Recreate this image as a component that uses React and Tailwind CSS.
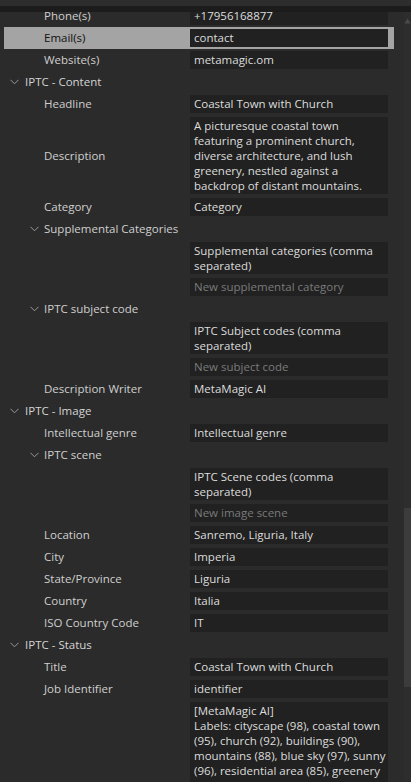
const font = { fontFamily: '"Open Sans", "Noto Sans", sans-serif' };

function Chevron() {
  return (
    <svg width="9" height="6" viewBox="0 0 9 6" className="shrink-0">
      <polyline points="0.5,0.8 4.5,4.8 8.5,0.8" fill="none" stroke="#9a9a9a" strokeWidth="1" />
    </svg>
  );
}

const rows = [
  { type: "field", label: "Phone(s)", value: "+17956168877" },
  { type: "field", label: "Email(s)", value: "contact", selected: true },
  { type: "field", label: "Website(s)", value: "metamagic.om" },
  { type: "section", label: "IPTC - Content" },
  { type: "field", label: "Headline", value: "Coastal Town with Church" },
  {
    type: "field",
    label: "Description",
    lines: [
      "A picturesque coastal town",
      "featuring a prominent church,",
      "diverse architecture, and lush",
      "greenery, nestled against a",
      "backdrop of distant mountains.",
    ],
  },
  { type: "field", label: "Category", value: "Category" },
  { type: "sub", label: "Supplemental Categories" },
  { type: "field", label: "", lines: ["Supplemental categories (comma", "separated)"] },
  { type: "field", label: "", placeholder: "New supplemental category" },
  { type: "sub", label: "IPTC subject code" },
  { type: "field", label: "", lines: ["IPTC Subject codes (comma", "separated)"] },
  { type: "field", label: "", placeholder: "New subject code" },
  { type: "field", label: "Description Writer", value: "MetaMagic AI" },
  { type: "section", label: "IPTC - Image" },
  { type: "field", label: "Intellectual genre", value: "Intellectual genre" },
  { type: "sub", label: "IPTC scene" },
  { type: "field", label: "", lines: ["IPTC Scene codes (comma", "separated)"] },
  { type: "field", label: "", placeholder: "New image scene" },
  { type: "field", label: "Location", value: "Sanremo, Liguria, Italy" },
  { type: "field", label: "City", value: "Imperia" },
  { type: "field", label: "State/Province", value: "Liguria" },
  { type: "field", label: "Country", value: "Italia" },
  { type: "field", label: "ISO Country Code", value: "IT" },
  { type: "section", label: "IPTC - Status" },
  { type: "field", label: "Title", value: "Coastal Town with Church" },
  { type: "field", label: "Job Identifier", value: "identifier" },
  {
    type: "field",
    label: "",
    lines: [
      "[MetaMagic AI]",
      "Labels: cityscape (98), coastal town",
      "(95), church (92), buildings (90),",
      "mountains (88), blue sky (97), sunny",
      "(96), residential area (85), greenery",
      "(93), rooftops (75), trees (78),",
      "harbor (70)",
    ],
  },
];

function Field({ row }) {
  const sel = row.selected;
  return (
    <div className={`flex items-center py-[2px] pr-[6px] ${sel ? "bg-[#a4a4a4]" : ""}`}>
      <div className={`w-[186px] shrink-0 pl-[40px] text-[11.5px] ${sel ? "text-[#111111]" : "text-[#cfcfcf]"}`}>
        {row.label}
      </div>
      {row.lines ? (
        <div className="w-[198px] bg-[#212121] px-[4px] py-[1px] text-[11.5px] leading-[15px] text-[#dcdcdc] whitespace-nowrap overflow-hidden">
          {row.lines.map((l, i) => (
            <div key={i}>{l}</div>
          ))}
        </div>
      ) : (
        <div
          className={`h-[18px] w-[198px] bg-[#212121] px-[4px] text-[11.5px] leading-[18px] whitespace-nowrap overflow-hidden ${
            row.placeholder ? "text-[#7a7a7a]" : "text-[#dcdcdc]"
          } ${sel ? "bg-[#1e1e1e]" : ""}`}
        >
          {row.value || row.placeholder}
        </div>
      )}
    </div>
  );
}

export default function App() {
  return (
    <div className="h-[782px] w-[411px] bg-[#2b2b2b] flex flex-col overflow-hidden" style={font}>
      <div className="h-[6px] bg-[#2d2d2d]" />
      <div className="h-[6px] bg-[#1c1c1c]" />
      <div className="flex-1 flex min-h-0">
        <div className="flex-1 overflow-hidden pl-[4px] pr-[10px]">
          <div className="mt-[-7px]">
            {rows.map((row, i) => {
              if (row.type === "section") {
                return (
                  <div key={i} className="h-[22px] flex items-center pl-[6px] gap-[6px] text-[11.5px] text-[#d4d4d4]">
                    <Chevron />
                    <span>{row.label}</span>
                  </div>
                );
              }
              if (row.type === "sub") {
                return (
                  <div key={i} className="h-[22px] flex items-center pl-[26px] gap-[5px] text-[11.5px] text-[#cfcfcf]">
                    <Chevron />
                    <span>{row.label}</span>
                  </div>
                );
              }
              return <Field key={i} row={row} />;
            })}
          </div>
        </div>
        <div className="w-[7px] bg-[#2d2d2d] flex flex-col">
          <div className="h-[12px] flex items-end justify-center">
            <svg width="7" height="6" viewBox="0 0 7 6">
              <polygon points="3.5,0.5 6.5,5.5 0.5,5.5" fill="#4a4a4a" />
            </svg>
          </div>
          <div className="h-[484px]" />
          <div className="h-[179px] bg-[#3c3c3c]" />
        </div>
      </div>
    </div>
  );
}
